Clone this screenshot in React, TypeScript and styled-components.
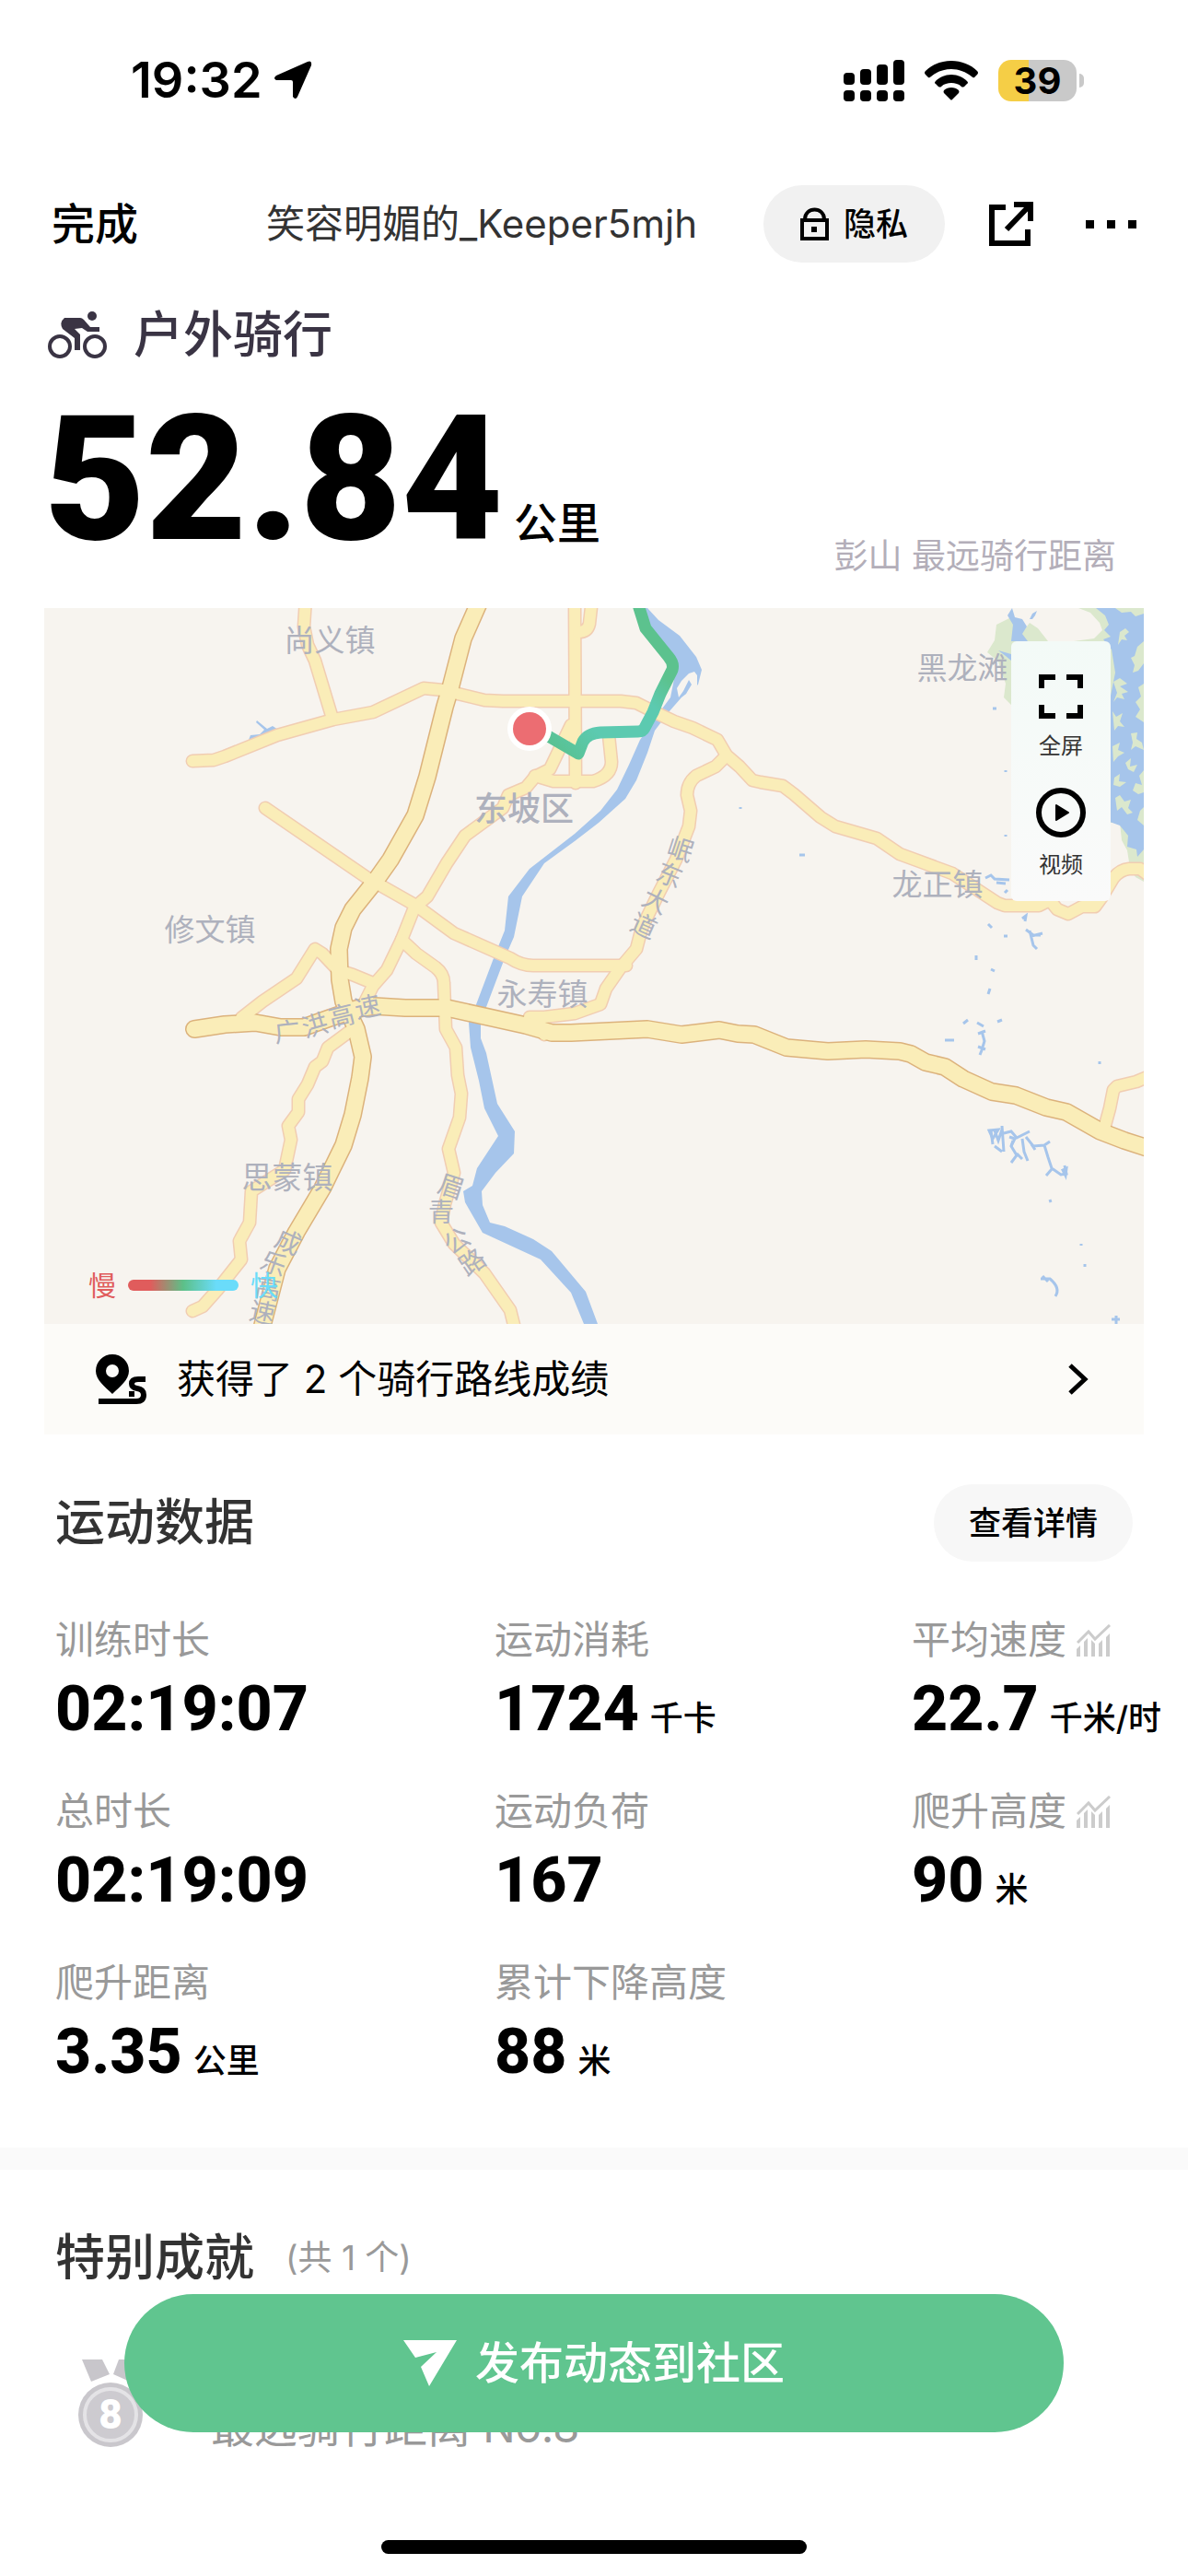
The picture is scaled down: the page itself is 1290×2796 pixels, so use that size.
import React from "react";
import styled, { createGlobalStyle } from "styled-components";

const sans = `Inter, "Noto Sans CJK SC", sans-serif`;
const digits = `Roboto, "Noto Sans CJK SC", sans-serif`;

const GlobalStyle = createGlobalStyle`
  * { box-sizing: border-box; }
  body { margin: 0; background: #fff; color: #000; font-family: ${sans}; line-height: 60px; }
  button { border: 0; padding: 0; margin: 0; background: none; color: inherit; font: inherit; cursor: pointer; }
  h1, h2, p, dl, dd, dt { margin: 0; font-weight: inherit; }
  svg { display: block; flex: none; }
`;

const Page = styled.main`
  min-height: 100vh;
  padding-bottom: 140px;
  overflow: hidden;
`;

const StatusBar = styled.header`
  display: flex;
  align-items: center;
  justify-content: space-between;
  height: 174px;
  padding: 0 113px 0 142px;
`;

const Clock = styled.div`
  display: flex;
  align-items: center;
  gap: 12px;
  font: 600 54px/64px ${sans};
`;

const StatusIcons = styled.div`
  display: flex;
  align-items: center;
  gap: 22px;
`;

const Battery = styled.div`
  display: flex;
  align-items: center;
  gap: 3px;
  &::after {
    content: "";
    width: 5px;
    height: 15px;
    border-radius: 0 5px 5px 0;
    background: #c9c9c9;
  }
`;

const BatteryLevel = styled.div<{ $level: number }>`
  width: 85px;
  height: 45px;
  border-radius: 14px;
  background: linear-gradient(90deg, #f5ce46 ${(p) => p.$level}%, #c9c9c9 ${(p) => p.$level}%);
  text-align: center;
  font: 700 40px/45px ${sans};
`;

const TopBar = styled.nav`
  display: flex;
  align-items: center;
  height: 138px;
  padding: 0 56px;
`;

const DoneButton = styled.button`
  font-size: 47px;
  font-weight: 500;
`;

const UserName = styled.h1`
  flex: 1;
  margin-left: 139px;
  color: #333;
  font-size: 42px;
  white-space: nowrap;
`;

const Pill = styled.button<{ $tone: string; $pad: number }>`
  display: flex;
  align-items: center;
  gap: 16px;
  height: 84px;
  padding: 0 ${(p) => p.$pad}px;
  border-radius: 42px;
  background: ${(p) => p.$tone};
  font-size: 35px;
  font-weight: 500;
`;

const IconButton = styled.button<{ $gap: number }>`
  margin-left: ${(p) => p.$gap}px;
`;

const Summary = styled.section`
  padding: 12px 48px 0;
`;

const SportType = styled.div`
  display: flex;
  align-items: center;
  gap: 28px;
  height: 80px;
  padding-left: 3px;
  color: #3a3444;
  font-size: 54px;
  font-weight: 500;
`;

const DistanceRow = styled.div`
  display: flex;
  align-items: flex-end;
  justify-content: space-between;
  height: 256px;
`;

const Distance = styled.p`
  display: flex;
  align-items: baseline;
  gap: 12px;
  padding-bottom: 40px;
  font: 900 190px/200px ${digits};
`;

const DistanceUnit = styled.span`
  font: 500 47px/60px ${sans};
`;

const Record = styled.p`
  padding: 0 30px 24px 0;
  color: #b3aeb9;
  font-size: 37px;
  line-height: 64px;
`;

const MapCard = styled.section`
  position: relative;
  margin: 0 48px;
  background: #fcfbf8;
`;

const MapCanvas = styled.svg`
  width: 100%;
  height: auto;
  background: #f7f4ef;
`;

const MapLabel = styled.text`
  fill: #aeb1bd;
  font-family: ${sans};
  text-anchor: middle;
`;

const MapTools = styled.div`
  position: absolute;
  top: 36px;
  right: 36px;
  display: flex;
  flex-direction: column;
  align-items: center;
  width: 108px;
  height: 282px;
  padding-top: 36px;
  border-radius: 6px;
  background: linear-gradient(180deg, #f3faf7, #fafafa);
`;

const MapTool = styled.button`
  display: flex;
  flex-direction: column;
  align-items: center;
  gap: 12px;
  height: 126px;
  color: #333;
  font-size: 24px;
  line-height: 36px;
`;

const SpeedLegend = styled.div`
  position: absolute;
  left: 48px;
  bottom: 142px;
  display: flex;
  align-items: center;
  gap: 13px;
  font-size: 30px;
  line-height: 40px;
`;

const SpeedWord = styled.span<{ $color: string }>`
  color: ${(p) => p.$color};
`;

const SpeedBar = styled.span`
  width: 120px;
  height: 12px;
  border-radius: 6px;
  background: linear-gradient(90deg, #e05c5c 20%, #5cc088 50%, #6adcfa 80%);
`;

const RouteResult = styled.button`
  display: flex;
  align-items: center;
  width: 100%;
  height: 120px;
  padding: 0 60px 0 56px;
  text-align: left;
  font-size: 42px;
`;

const RouteText = styled.span`
  flex: 1;
  padding-left: 32px;
`;

const DataSection = styled.section`
  padding: 54px 0 24px 60px;
`;

const SectionHead = styled.div`
  display: flex;
  align-items: center;
  justify-content: space-between;
  min-height: 84px;
  padding-right: 60px;
`;

const SectionTitle = styled.h2`
  color: #333;
  font-size: 54px;
  line-height: 80px;
  font-weight: 500;
`;

const DataGrid = styled.dl`
  display: grid;
  grid-template-columns: 477fr 453fr 300fr;
  grid-auto-rows: 186px;
  margin-top: 54px;
`;

const Label = styled.dt`
  display: flex;
  align-items: center;
  gap: 11px;
  height: 62px;
  color: #999;
  font-size: 42px;
`;

const Value = styled.dd`
  display: flex;
  align-items: baseline;
  gap: 12px;
  font: 800 68px/88px ${digits};
  white-space: nowrap;
`;

const Unit = styled.span`
  font: 500 36px/50px ${sans};
`;

const Achievements = styled.section`
  padding: 56px 60px 0;
  border-top: 24px solid #fafafa;
`;

const AchievementHead = styled.div`
  display: flex;
  align-items: center;
  gap: 34px;
`;

const Count = styled.span`
  color: #999;
  font-size: 37px;
`;

const AchievementRow = styled.div`
  display: flex;
  align-items: flex-end;
  gap: 74px;
  height: 165px;
  padding-left: 25px;
  color: #999;
  font-size: 47px;
  line-height: 44px;
`;

const Dock = styled.div`
  position: fixed;
  left: 0;
  right: 0;
  bottom: 0;
  display: flex;
  flex-direction: column;
  align-items: center;
  padding: 0 135px 24px;
`;

const PublishButton = styled.button`
  display: flex;
  align-items: center;
  justify-content: center;
  gap: 20px;
  width: 100%;
  height: 150px;
  border-radius: 75px;
  background: #60c58f;
  color: #fff;
  font-size: 48px;
  font-weight: 500;
`;

const HomeIndicator = styled.div`
  width: 462px;
  height: 15px;
  margin-top: 117px;
  border-radius: 8px;
  background: #000;
`;

const minorRoads = [
  "M284 -10L282 20L286 40L294 57L313 120",
  "M161 166L184 165L196 161L253 138L314 121L357 113L412 87L433 89L449 93L478 100L498 101H626L643 103L663 113L684 123L704 130L731 143L741 160L755 172L769 187L778 189L802 193L814 202L843 227L859 237L904 250L929 267L986 288L1035 320L1043 323L1080 323L1092 317L1100 327L1112 332L1127 324L1141 324L1149 313L1161 293Q1168 284 1178 283H1190L1202 292",
  "M240 217L351 293L404 323L445 353L506 380Q518 388 531 388H632",
  "M741 160L729 172L708 182Q698 190 698 203L702 220L700 237L686 273L667 310L649 347L643 370L626 390L610 413L604 430L576 440L543 444H527L543 463",
  "M576 -10L577 190",
  "M595 -10L592 17Q590 26 580 26",
  "M533 182L553 188H596Q616 182 616 167L613 138",
  "M572 127L549 175L533 183L523 195L504 203L498 217L457 247L437 277L416 313L402 325L396 340L388 360L372 393L357 410L347 430",
  "M388 360L404 375L425 390Q434 397 434 407L436 457L447 477L449 507L453 527L451 553L439 587L445 613L435 647L431 667L445 690L478 722L506 762L513 790",
  "M214 445L237 427L274 402L294 370L302 375L319 393L335 398L357 407",
  "M1151 565L1157 543L1161 523L1165 519L1186 514L1200 508",
  "M335 457L308 477L302 492L294 498L286 517L276 533V547L265 562L268 577L261 610L225 633L223 667L212 687L214 707L188 740L172 758L161 763",
];

const majorRoads = [
  "M474 -10L455 33L441 87L435 107L425 147L416 183L403 225L376 273L359 297L335 327L325 347L320 370L321 403L325 427L339 457L346 487L343 510L335 550L325 583L302 630L274 677L253 717L234 790",
  "M163 457L196 452L229 450L257 455H282L310 445L339 435L359 432L392 434L437 434L523 453L551 461H572L655 457L692 463L733 458L753 462L771 463L806 477L851 481L892 479L929 481L941 484L957 493L978 498L998 511L1029 525L1055 529L1088 542L1110 547L1147 568L1173 578L1204 588",
];

const rivers = [
  "M647 0H655L667 13L690 30L708 53L714 67L710 83L692 97L678 113L663 133L655 157L643 187L631 207L602 233L576 253L543 277L519 313L510 357L500 380L480 433L474 450V467L480 483L492 538L511 568L510 592L490 613L475 633L476 648L484 667L500 671L531 685L551 698L588 742L601 777H586L572 743L539 707L476 678L457 645L455 633L465 627L470 608L493 573L478 543L472 513L463 477L461 450L468 433L488 380L500 350L504 313L527 283L576 245L604 220L622 197L635 170L647 143L663 120L680 97L686 67L675 50Z",
  "M222 143L224 138L234 137L239 132L230 124L231 122L242 131L248 128L254 132L252 137L240 142L228 141Z",
  "M1051 0L1054 10L1062 12L1067 20L1062 28L1068 36H1050L1052 18L1046 8ZM1070 12L1073 6L1078 3L1076 8L1073 12ZM1036 46L1050 50V57L1044 52Z",
  "M1142 0L1152 8L1156 18L1151 24L1158 31L1150 34L1159 45L1163 70L1157 100V232L1168 236L1177 247L1176 259L1186 262L1187 270L1194 262V0Z",
];

const parkland = [
  "M1050 10L1034 18L1032 35L1024 48L1036 58L1040 70L1044 82L1042 97L1052 107L1090 100V36L1079 22L1070 16L1064 24Z",
  "M1123 0L1136 5L1146 16L1149 24L1140 33L1118 36L1130 100V233H1168L1170 252L1176 263L1179 282L1185 292L1194 297V0Z",
];

const islands = [
  "M1163 0L1170 5L1180 4L1185 9L1194 6V0Z",
  "M1168 26L1174 22L1178 26L1173 30L1176 35L1170 34L1166 40Z",
  "M1194 36L1187 42L1184 52L1180 54L1184 62L1182 70L1188 68L1194 60Z",
  "M1161 80L1168 76L1176 82L1168 85L1177 91L1170 93L1173 99L1165 97L1161 102L1165 92Z",
  "M1194 82L1188 86L1191 96L1185 102L1190 110L1185 118L1194 124Z",
  "M1160 112L1164 118L1171 114L1168 123L1173 129L1166 128L1162 133Z",
  "M1180 136L1187 135L1186 142L1192 146L1194 154L1185 150L1180 154L1182 146Z",
  "M1160 150L1168 146L1166 154L1173 157L1166 161L1161 167Z",
  "M1174 168L1180 163L1179 172L1187 170L1183 178L1177 175Z",
  "M1162 184L1168 180L1167 188L1175 189L1168 194L1161 192Z",
  "M1194 176L1189 182L1192 192L1185 190L1182 198L1188 202L1194 200Z",
  "M1163 206L1168 203L1173 210L1180 208L1177 217L1182 222L1176 224L1170 216L1165 220Z",
  "M1194 216L1190 220L1187 230L1194 236Z",
  "M689 97L687 87L692 79L700 71L706 69L709 73L709 84L703 91L697 93L703 83L700 78L694 90Z",
];

const creeks = [
  "M1022 293L1028 290L1032 294L1048 295M1034 298L1044 299M1043 309L1046 306",
  "M1025 343L1029 347M1062 337L1066 334L1065 340M1066 349L1074 355H1082M1070 350L1074 366L1078 370M1072 356L1084 353M1042 356H1046",
  "M1012 377V382M1028 392L1032 394M1025 419L1027 413M1013 450L1020 454M1018 459L1021 470L1018 480L1016 485M1014 462L1022 459M1014 476L1022 479M978 469L988 469M998 451L1003 447M1035 449L1040 447M1146 492V495",
  "M1028 567L1030 582M1032 567L1036 578L1040 566M1040 562L1042 590M1042 570L1050 568L1056 575L1066 570L1070 568M1052 578L1050 584L1056 594L1050 602M1056 592L1062 598M1062 576L1064 590L1068 600M1066 574L1074 584L1086 583L1092 579M1086 583L1090 596L1094 608L1104 615L1110 614L1108 605M1094 609L1088 616M1032 584L1040 590",
  "M1026 567L1036 566L1030 576ZM1048 574L1054 576L1050 584M1072 582L1076 588M1106 610L1110 608L1109 616Z",
  "M1082 728H1092Q1104 738 1098 747M1084 725L1090 731M1092 642L1093 645M1164 768V777M1159 772L1168 772M1130 712V715M1126 690V692",
  "M820 268H826M756 216V218M1044 176V178M1044 246V248M1030 109H1034",
];

type Place = { text: string; x: number; y: number; turn?: number };

const places: Place[] = [
  { text: "尚义镇", x: 310, y: 47 },
  { text: "黑龙滩", x: 997, y: 77 },
  { text: "龙正镇", x: 970, y: 312 },
  { text: "修文镇", x: 180, y: 361 },
  { text: "永寿镇", x: 541, y: 431 },
  { text: "思蒙镇", x: 264, y: 630 },
];

const roadNames: Place[] = [
  { text: "岷", x: 691, y: 262, turn: 18 },
  { text: "东", x: 679, y: 290, turn: 22 },
  { text: "大", x: 664, y: 318, turn: 26 },
  { text: "道", x: 651, y: 345, turn: 24 },
  { text: "广", x: 264, y: 460, turn: -6 },
  { text: "洪", x: 294, y: 453, turn: -16 },
  { text: "高", x: 323, y: 443, turn: -14 },
  { text: "速", x: 351, y: 433, turn: -12 },
  { text: "成", x: 265, y: 688, turn: 24 },
  { text: "乐", x: 249, y: 712, turn: 20 },
  { text: "高", x: 243, y: 739, turn: 10 },
  { text: "速", x: 237, y: 765, turn: 12 },
  { text: "眉", x: 442, y: 628, turn: 18 },
  { text: "青", x: 431, y: 656, turn: 0 },
  { text: "公", x: 448, y: 687, turn: -34 },
  { text: "路", x: 465, y: 710, turn: -34 },
];

const track = "M643 -10L653 22L678 53Q684 60 682 67L669 93L661 113L652 130Q650 134 645 134L604 135Q590 136 585 145L580 158L549 140L527 131";

function RideMap() {
  return (
    <MapCanvas viewBox="0 0 1194 777" role="img" aria-label="骑行路线地图">
      <defs>
        <linearGradient id="pace" gradientUnits="userSpaceOnUse" x1="540" y1="150" x2="690" y2="0">
          <stop offset="0" stopColor="#58c08d" />
          <stop offset="0.25" stopColor="#5ccab0" />
          <stop offset="0.55" stopColor="#5ccab0" />
          <stop offset="0.7" stopColor="#5cc28e" />
          <stop offset="0.9" stopColor="#5cc28e" />
          <stop offset="1" stopColor="#5ccab0" />
        </linearGradient>
      </defs>
      {parkland.map((d) => <path key={d} d={d} fill="#dbe8cd" />)}
      {rivers.map((d) => <path key={d} d={d} fill="#a6c5eb" />)}
      {islands.map((d, i) => <path key={d} d={d} fill={i === islands.length - 1 ? "#f7f4ef" : "#dbe8cd"} />)}
      {creeks.map((d) => <path key={d} d={d} fill="none" stroke="#a6c5eb" strokeWidth="3" />)}
      <g fill="none" strokeLinecap="round" strokeLinejoin="round">
        {minorRoads.map((d) => <path key={d} d={d} stroke="#f1cdb2" strokeWidth="15" />)}
        {majorRoads.map((d) => <path key={d} d={d} stroke="#dcb27c" strokeWidth="20" />)}
        {minorRoads.map((d) => <path key={d} d={d} stroke="#faedb8" strokeWidth="12" />)}
        {majorRoads.map((d) => <path key={d} d={d} stroke="#faedb8" strokeWidth="17" />)}
      </g>
      {places.map((p) => <MapLabel key={p.text} x={p.x} y={p.y} fontSize="33">{p.text}</MapLabel>)}
      <MapLabel x="521" y="231" fontSize="36" fontWeight="500">东坡区</MapLabel>
      {roadNames.map((p) => (
        <MapLabel key={`${p.text}${p.y}`} transform={`translate(${p.x} ${p.y}) rotate(${p.turn})`} y="10" fontSize="28">{p.text}</MapLabel>
      ))}
      <path d={track} fill="none" stroke="url(#pace)" strokeWidth="13" strokeLinejoin="round" />
      <circle cx="527" cy="131" r="24" fill="#fff" />
      <circle cx="527" cy="131" r="18" fill="#ec6d72" />
    </MapCanvas>
  );
}

function TrendIcon() {
  return (
    <svg width="37" height="35" viewBox="0 0 37 35" aria-hidden="true">
      <path d="M1 20L13 8L20 16L36 1" fill="none" stroke="#ccc" strokeWidth="3" />
      <path fill="#ccc" d="M0 27L4 23V35H0ZM8 19L12 15V35H8ZM16 17L20 21V35H16ZM24 21L28 17V35H24ZM32 14L36 10V35H32Z" />
    </svg>
  );
}

function StatusIndicators() {
  return (
    <StatusIcons>
      <svg width="66" height="45" viewBox="0 0 66 45" aria-hidden="true">
        <rect x="0" y="14" width="12" height="13" rx="4" />
        <rect x="18" y="10" width="12" height="17" rx="4" />
        <rect x="36" y="5" width="12" height="22" rx="4" />
        <rect x="54" y="0" width="12" height="27" rx="4" />
        {[0, 18, 36, 54].map((x) => <rect key={x} x={x} y="33" width="12" height="12" rx="4" />)}
      </svg>
      <svg width="58" height="43" viewBox="0 0 58 43" aria-hidden="true">
        <path d="M29 0C40 0 50 4 57 11Q59 13 57 15L54 18Q53 19 51 17C45 12 37 9 29 9S13 12 7 17Q5 19 4 18L1 15Q-1 13 1 11C8 4 18 0 29 0Z" />
        <path d="M29 15C36 15 42 18 46 22Q48 24 46 25L43 28Q41 29 40 28C37 25 33 24 29 24S21 25 18 28Q17 29 15 28L12 25Q10 24 12 22C16 18 22 15 29 15Z" />
        <path d="M29 29C32 29 35 30 37 32Q38 34 37 35L30 42Q29 43 28 42L21 35Q20 34 21 32C23 30 26 29 29 29Z" />
      </svg>
      <Battery><BatteryLevel $level={39}>39</BatteryLevel></Battery>
    </StatusIcons>
  );
}

type Metric = { label: string; value: string; unit?: string; trend?: boolean };

const metrics: Metric[] = [
  { label: "训练时长", value: "02:19:07" },
  { label: "运动消耗", value: "1724", unit: "千卡" },
  { label: "平均速度", value: "22.7", unit: "千米/时", trend: true },
  { label: "总时长", value: "02:19:09" },
  { label: "运动负荷", value: "167" },
  { label: "爬升高度", value: "90", unit: "米", trend: true },
  { label: "爬升距离", value: "3.35", unit: "公里" },
  { label: "累计下降高度", value: "88", unit: "米" },
];

export default function App() {
  return (
    <>
      <GlobalStyle />
      <Page>
        <StatusBar>
          <Clock>
            <span>19:32</span>
            <svg width="42" height="42" viewBox="0 0 42 42" aria-hidden="true">
              <path d="M37 1Q42 -1 41 5L26 39Q24 43 21 39V23Q21 21 19 21H3Q-1 19 3 16Z" />
            </svg>
          </Clock>
          <StatusIndicators />
        </StatusBar>

        <TopBar>
          <DoneButton>完成</DoneButton>
          <UserName>笑容明媚的_Keeper5mjh</UserName>
          <Pill $tone="#f1f1f1" $pad={40}>
            <svg width="31" height="36" viewBox="0 0 31 36" fill="none" stroke="#000" strokeWidth="4" aria-hidden="true">
              <path d="M2 14H29V34H2ZM5 14V13C5 -1 26 -1 26 13V14" />
              <path d="M12 24H18" strokeWidth="6" />
            </svg>
            隐私
          </Pill>
          <IconButton $gap={48} aria-label="分享">
            <svg width="48" height="48" viewBox="0 0 48 48" fill="none" stroke="#000" strokeWidth="6" aria-hidden="true">
              <path d="M18 6H3V45H42V30M27 3H45V21M45 3L19 30" />
            </svg>
          </IconButton>
          <IconButton $gap={57} aria-label="更多">
            <svg width="55" height="9" viewBox="0 0 55 9" aria-hidden="true">
              <path d="M0 0H9V9H0ZM23 0H32V9H23ZM46 0H55V9H46Z" />
            </svg>
          </IconButton>
        </TopBar>

        <Summary>
          <SportType>
            <svg width="66" height="52" viewBox="7 8 66 52" aria-hidden="true">
              <g fill="none" stroke="#3a3444" strokeWidth="4">
                <circle cx="21" cy="46" r="11" />
                <circle cx="59" cy="46" r="11" />
              </g>
              <circle cx="56" cy="13" r="5" fill="#3a3444" />
              <path fill="#3a3444" d="M26 15H43Q45 15 47 17L54 25H64V30H51L45 26L37 27L43 33V50H37V37L24 27Q20 20 26 15Z" />
            </svg>
            户外骑行
          </SportType>
          <DistanceRow>
            <Distance>52.84<DistanceUnit>公里</DistanceUnit></Distance>
            <Record>彭山 最远骑行距离</Record>
          </DistanceRow>
        </Summary>

        <MapCard>
          <RideMap />
          <SpeedLegend>
            <SpeedWord $color="#e05c5c">慢</SpeedWord>
            <SpeedBar />
            <SpeedWord $color="#6adcfa">快</SpeedWord>
          </SpeedLegend>
          <MapTools>
            <MapTool>
              <svg width="48" height="48" viewBox="0 0 48 48" fill="none" stroke="#000" strokeWidth="6" aria-hidden="true">
                <path d="M3 15V3H18M30 3H45V15M45 33V45H30M18 45H3V33" />
              </svg>
              全屏
            </MapTool>
            <MapTool>
              <svg width="54" height="54" viewBox="0 0 54 54" aria-hidden="true">
                <circle cx="27" cy="27" r="24" fill="none" stroke="#000" strokeWidth="6" />
                <path d="M22 19L35 27L22 35Z" stroke="#000" strokeWidth="2" strokeLinejoin="round" />
              </svg>
              视频
            </MapTool>
          </MapTools>
          <RouteResult>
            <svg width="56" height="54" viewBox="0 0 56 54" aria-hidden="true">
              <path fillRule="evenodd" d="M18 0A18 18 0 0 1 36 18C36 28 26 35 18 43C10 35 0 28 0 18A18 18 0 0 1 18 0ZM18 11A7 7 0 0 0 18 25A7 7 0 0 0 18 11Z" />
              <path d="M54 27H46Q39 27 39 32 39 36 45 37 52 38 52 44 52 51 44 51H3M36 43H42" fill="none" stroke="#000" strokeWidth="6" />
            </svg>
            <RouteText>获得了 2 个骑行路线成绩</RouteText>
            <svg width="22" height="34" viewBox="0 0 22 34" fill="none" stroke="#000" strokeWidth="5" aria-hidden="true">
              <path d="M2 2L18 17L2 32" />
            </svg>
          </RouteResult>
        </MapCard>

        <DataSection>
          <SectionHead>
            <SectionTitle>运动数据</SectionTitle>
            <Pill $tone="#f7f7f7" $pad={38}>查看详情</Pill>
          </SectionHead>
          <DataGrid>
            {metrics.map((m) => (
              <div key={m.label}>
                <Label>{m.label}{m.trend && <TrendIcon />}</Label>
                <Value>{m.value}{m.unit && <Unit>{m.unit}</Unit>}</Value>
              </div>
            ))}
          </DataGrid>
        </DataSection>

        <Achievements>
          <AchievementHead>
            <SectionTitle>特别成就</SectionTitle>
            <Count>(共 1 个)</Count>
          </AchievementHead>
          <AchievementRow>
            <svg width="70" height="95" viewBox="0 0 70 95" aria-hidden="true">
              <path fill="#c8c6cb" d="M4 0H26L34 16L14 24ZM66 0H44L38 16L56 24Z" />
              <circle cx="35" cy="60" r="35" fill="#c9c7cc" />
              <circle cx="35" cy="60" r="28" fill="#cdcbd0" stroke="#e4e3e6" strokeWidth="4" />
              <text x="35" y="75" textAnchor="middle" fontFamily="Roboto, sans-serif" fontWeight="900" fontSize="44" fill="#fff">8</text>
            </svg>
            最远骑行距离 No.8
          </AchievementRow>
        </Achievements>
      </Page>

      <Dock>
        <PublishButton>
          <svg width="58" height="50" viewBox="0 0 58 50" aria-hidden="true">
            <path fill="#fff" d="M0 0H58L28 50L19 29L36 13L13 19Z" />
          </svg>
          发布动态到社区
        </PublishButton>
        <HomeIndicator />
      </Dock>
    </>
  );
}
